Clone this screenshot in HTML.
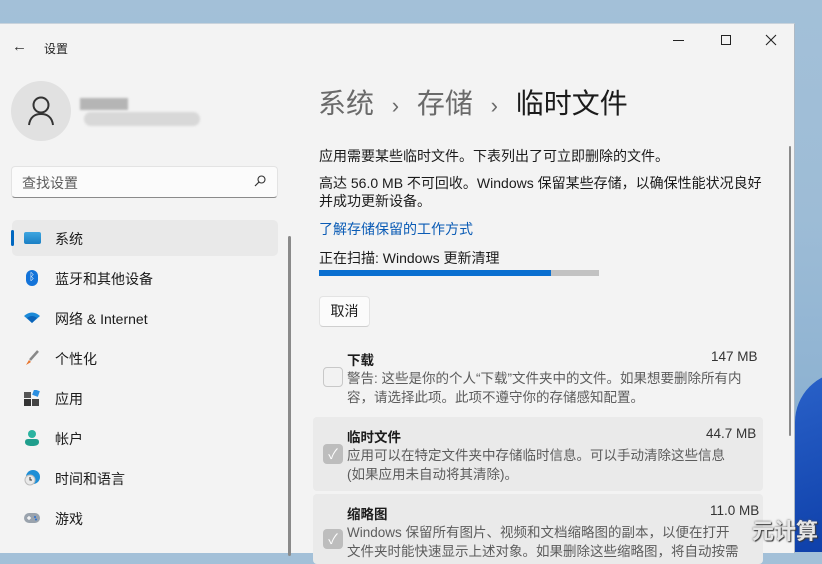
<!DOCTYPE html>
<html><head><meta charset="utf-8"><style>
*{margin:0;padding:0;box-sizing:border-box}
body{width:822px;height:548px;overflow:hidden;position:relative;font-family:"Liberation Sans","Noto Sans CJK SC",sans-serif;background:linear-gradient(180deg,#a3c0d8 0%,#9dbcd6 40%,#8fb3d2 70%,#7da6cc 100%);color:#1b1b1b}
.deskblue{position:absolute;left:795px;top:372px;width:60px;height:180px;background:linear-gradient(160deg,#2a62c9,#0d3ea8);border-radius:50px 0 0 0}
.win{position:absolute;left:0;top:23px;width:795px;height:530px;background:#f3f3f3;border-top:1px solid #c9d3dc;border-right:1px solid #aeb9c4}
.abs{position:absolute}
.t{position:absolute;white-space:nowrap}
.nav{position:absolute;left:12px;width:266px;height:36px;font-size:14px}
.nav .ic{position:absolute;left:12px;top:10px;width:16px;height:16px}
.nav .lb{position:absolute;left:43px;top:9px}
.card{position:absolute;left:313px;width:450px;background:#eaeaea;border-radius:4px}
.cb{position:absolute;width:20px;height:20px;border-radius:4px}
.small{font-size:13.5px;color:#5c5c5c;line-height:19px}
.ch{font-size:22px;margin:0 10px}
</style></head><body>
<div class="deskblue"></div>
<div class="win">
  <div class="t" style="left:12px;top:14px;font-size:15px;color:#333">←</div>
  <div class="t" style="left:44px;top:16px;font-size:12px;color:#222">设置</div>
  <div class="abs" style="left:673px;top:16px;width:11px;height:1px;background:#222"></div>
  <div class="abs" style="left:721px;top:11px;width:10px;height:10px;border:1px solid #222"></div>
  <svg class="abs" style="left:765px;top:10px" width="12" height="12" viewBox="0 0 12 12"><path d="M1 1 L11 11 M11 1 L1 11" stroke="#222" stroke-width="1.1"/></svg>
  <div class="abs" style="left:11px;top:57px;width:60px;height:60px;border-radius:50%;background:#e1e1e1"></div>
  <svg class="abs" style="left:27px;top:72px" width="28" height="30" viewBox="0 0 28 30"><circle cx="14" cy="9" r="7.5" fill="none" stroke="#333" stroke-width="2"/><path d="M2 29 C3 21 8 18 14 18 C20 18 25 21 26 29" fill="none" stroke="#333" stroke-width="2"/></svg>
  <div class="abs" style="left:80px;top:74px;width:48px;height:12px;background:#b5b5b5;filter:blur(1px)"></div>
  <div class="abs" style="left:84px;top:88px;width:116px;height:14px;background:#d8d8d8;border-radius:7px;filter:blur(1px)"></div>
  <div class="abs" style="left:11px;top:142px;width:267px;height:32px;background:#fbfbfb;border:1px solid #e3e3e3;border-bottom:1px solid #8a8a8a;border-radius:4px"></div>
  <div class="t" style="left:22px;top:149px;font-size:14px;color:#5d5d5d">查找设置</div>
  <svg class="abs" style="left:254px;top:151px" width="12" height="12" viewBox="0 0 12 12"><circle cx="7.5" cy="4.5" r="3.5" fill="none" stroke="#333" stroke-width="1.1"/><path d="M5 7 L1 11" stroke="#333" stroke-width="1.2"/></svg>
  <div class="nav" style="top:196px;background:#e9e9e9;border-radius:5px"><div class="abs" style="left:-1px;top:10px;width:3px;height:16px;background:#0067c0;border-radius:2px"></div>
    <div class="ic" style="top:12px;height:12px;width:17px;background:linear-gradient(#3fa6e0,#1a7fc4);border-radius:2px"></div><div class="lb">系统</div></div>
  <div class="nav" style="top:236px"><div class="ic" style="left:14px;width:12px;height:16px;background:#1373d9;border-radius:6px;color:#fff;font-size:10px;text-align:center;line-height:16px">ᛒ</div><div class="lb">蓝牙和其他设备</div></div>
  <div class="nav" style="top:276px"><svg class="ic" viewBox="0 0 16 16"><path d="M0 6 Q8 -1 16 6 L8 13Z" fill="#1c8ad8"/><path d="M3 8 Q8 4 13 8 L8 13Z" fill="#0b63b8"/></svg><div class="lb">网络 &amp; Internet</div></div>
  <div class="nav" style="top:316px"><svg class="ic" viewBox="0 0 16 16"><path d="M14 1 L6 10" stroke="#888" stroke-width="2.5"/><path d="M5 10 L2 15 L7 12Z" fill="#e8732a"/></svg><div class="lb">个性化</div></div>
  <div class="nav" style="top:356px"><svg class="ic" viewBox="0 0 16 16"><rect x="0" y="2" width="7" height="6" fill="#555"/><rect x="0" y="9" width="7" height="7" fill="#333"/><rect x="8" y="9" width="7" height="7" fill="#444"/><rect x="9" y="0" width="6" height="6" fill="#2b8fe0" transform="rotate(20 12 3)"/></svg><div class="lb">应用</div></div>
  <div class="nav" style="top:396px"><svg class="ic" viewBox="0 0 16 16"><circle cx="8" cy="4" r="4" fill="#2bb3a0"/><path d="M1 12 Q1 9 4 9 L12 9 Q15 9 15 12 Q15 16 8 16 Q1 16 1 12Z" fill="#1f9e8c"/></svg><div class="lb">帐户</div></div>
  <div class="nav" style="top:436px"><svg class="ic" viewBox="0 0 16 16"><circle cx="9" cy="7" r="7" fill="#1f8fd6"/><circle cx="6" cy="10" r="5" fill="#e9e9e9" stroke="#bbb"/><path d="M6 7 V10 H8" stroke="#333" fill="none"/></svg><div class="lb">时间和语言</div></div>
  <div class="nav" style="top:476px"><svg class="ic" viewBox="0 0 16 16"><rect x="0" y="3" width="16" height="10" rx="5" fill="#9aa3ad"/><path d="M3 8 H7 M5 6 V10" stroke="#fff" stroke-width="1.2"/><circle cx="11" cy="7" r="1" fill="#2a6fd0"/><circle cx="12" cy="9.5" r="1" fill="#2a6fd0"/></svg><div class="lb">游戏</div></div>
  <div class="abs" style="left:288px;top:212px;width:3px;height:320px;background:#8a8a8a;border-radius:2px"></div>
  <div class="t" style="left:318px;top:58px;font-size:28px;color:#6a6a6a">系统 <span class="ch">›</span> 存储 <span class="ch">›</span> <span style="color:#1b1b1b">临时文件</span></div>
  <div class="t" style="left:319px;top:122px;font-size:14px">应用需要某些临时文件。下表列出了可立即删除的文件。</div>
  <div class="t" style="left:319px;top:150px;font-size:14px;line-height:18px">高达 56.0 MB 不可回收。Windows 保留某些存储，以确保性能状况良好<br>并成功更新设备。</div>
  <div class="t" style="left:319px;top:195px;font-size:14px;color:#0a5bb5">了解存储保留的工作方式</div>
  <div class="t" style="left:319px;top:224px;font-size:14px">正在扫描: Windows 更新清理</div>
  <div class="abs" style="left:319px;top:246px;width:280px;height:6px;background:#c2c2c2"></div>
  <div class="abs" style="left:319px;top:246px;width:232px;height:6px;background:#0a6fd0"></div>
  <div class="abs" style="left:319px;top:272px;width:51px;height:31px;background:#fbfbfb;border:1px solid #e3e3e3;border-bottom-color:#cfcfcf;border-radius:4px;font-size:14px;text-align:center;line-height:29px">取消</div>
  <div class="t" style="left:347px;top:325px;font-size:13.5px;font-weight:bold">下载</div>
  <div class="t" style="left:711px;top:325px;font-size:13.5px;color:#333">147 MB</div>
  <div class="cb" style="left:323px;top:343px;border:1px solid #c8c8c8;background:#f2f2f2"></div>
  <div class="t small" style="left:347px;top:345px">警告: 这些是你的个人“下载”文件夹中的文件。如果想要删除所有内<br>容，请选择此项。此项不遵守你的存储感知配置。</div>
  <div class="card" style="top:393px;height:74px"></div>
  <div class="t" style="left:347px;top:402px;font-size:13.5px;font-weight:bold">临时文件</div>
  <div class="t" style="left:706px;top:402px;font-size:13.5px;color:#333">44.7 MB</div>
  <div class="cb" style="left:323px;top:420px;background:#bdbdbd;color:#fff;font-size:14px;text-align:center;line-height:20px">✓</div>
  <div class="t small" style="left:347px;top:422px">应用可以在特定文件夹中存储临时信息。可以手动清除这些信息<br>(如果应用未自动将其清除)。</div>
  <div class="card" style="top:470px;height:70px"></div>
  <div class="t" style="left:347px;top:479px;font-size:13.5px;font-weight:bold">缩略图</div>
  <div class="t" style="left:710px;top:479px;font-size:13.5px;color:#333">11.0 MB</div>
  <div class="cb" style="left:323px;top:505px;background:#bdbdbd;color:#fff;font-size:14px;text-align:center;line-height:20px">✓</div>
  <div class="t small" style="left:347px;top:499px">Windows 保留所有图片、视频和文档缩略图的副本，以便在打开<br>文件夹时能快速显示上述对象。如果删除这些缩略图，将自动按需</div>
  <div class="abs" style="left:789px;top:122px;width:2px;height:290px;background:#8a8a8a;border-radius:1px"></div>
</div>
<div class="t" style="left:752px;top:514px;font-size:22px;font-weight:bold;color:#e6e6e6;text-shadow:0 0 2px #555,1px 1px 1px #333">元计算</div>
</body></html>
